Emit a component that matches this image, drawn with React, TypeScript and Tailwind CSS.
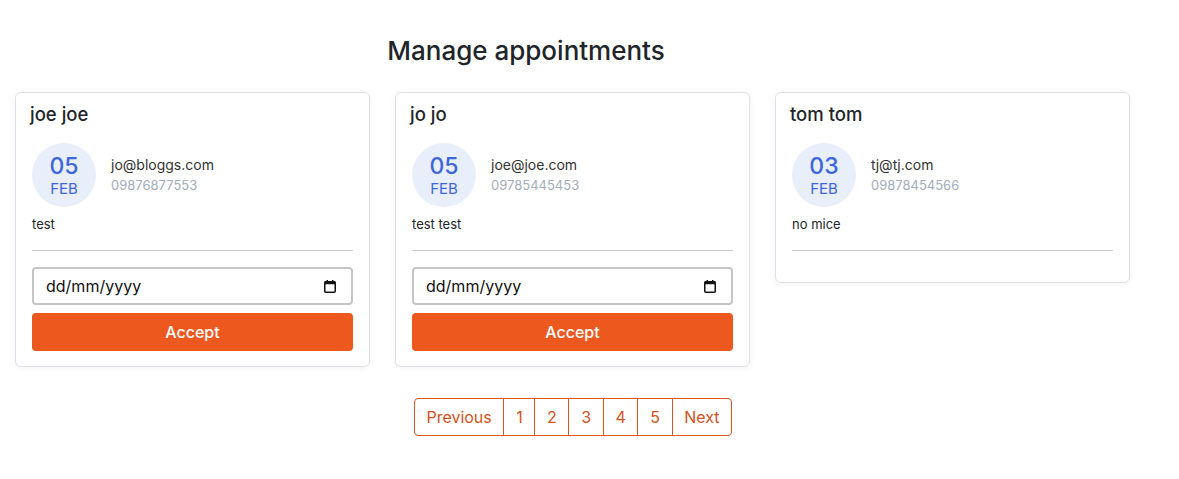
import React from "react";

type Appt = {
  name: string;
  day: string;
  month: string;
  email: string;
  phone: string;
  note: string;
  pending: boolean;
};

const appts: Appt[] = [
  { name: "joe joe", day: "05", month: "FEB", email: "jo@bloggs.com", phone: "09876877553", note: "test", pending: true },
  { name: "jo jo", day: "05", month: "FEB", email: "joe@joe.com", phone: "09785445453", note: "test test", pending: true },
  { name: "tom tom", day: "03", month: "FEB", email: "tj@tj.com", phone: "09878454566", note: "no mice", pending: false },
];

function CalendarIcon() {
  return (
    <svg width="12" height="13" viewBox="0 0 12 13" fill="none">
      <rect x="0.75" y="1.75" width="10.5" height="10.5" rx="1" stroke="#111" strokeWidth="1.5" />
      <rect x="0.75" y="1.75" width="10.5" height="2.5" fill="#111" />
      <rect x="2.5" y="0" width="1.5" height="2" fill="#111" />
      <rect x="8" y="0" width="1.5" height="2" fill="#111" />
    </svg>
  );
}

function Card({ a }: { a: Appt }) {
  return (
    <div className="w-[355px] bg-white border border-[#dee2e6] rounded-[6px] shadow-[0_1px_6px_rgba(0,0,0,0.06)] pt-[8px] px-[16px] pb-[15px] flex flex-col">
      <div className="text-[18.5px] leading-[26px] font-medium text-[#212529] -ml-[2px]">{a.name}</div>
      <div className="flex items-center mt-[16px]">
        <div className="w-[64px] h-[64px] rounded-full bg-[#e9eefb] flex flex-col items-center justify-center text-[#3d66dc]">
          <div className="text-[23px] leading-[27px] font-medium">{a.day}</div>
          <div className="text-[15px] leading-[18px]">{a.month}</div>
        </div>
        <div className="ml-[15px] flex flex-col">
          <div className="text-[14px] leading-[20px] text-[#333]">{a.email}</div>
          <div className="text-[13px] leading-[20px] text-[#a3adbd]">{a.phone}</div>
        </div>
      </div>
      <div className="text-[13px] leading-[20px] text-[#212529] mt-[7px]">{a.note}</div>
      <div className="h-px bg-[#cccccc] mt-[16px]" />
      {a.pending ? (
        <>
          <div className="mt-[16px] h-[38px] border-2 border-[#c5c5c5] rounded-[4px] flex items-center justify-between pl-[12px] pr-[15px]">
            <span className="text-[16px] text-[#111]">dd/mm/yyyy</span>
            <CalendarIcon />
          </div>
          <button className="mt-[8px] h-[38px] bg-[#ed581f] rounded-[4px] text-white text-[16px] font-medium">
            Accept
          </button>
        </>
      ) : (
        <div className="h-[16px]" />
      )}
    </div>
  );
}

export default function App() {
  const pages = ["Previous", "1", "2", "3", "4", "5", "Next"];
  return (
    <div className="w-[1179px] h-[479px] bg-white font-['Inter',sans-serif] text-[#212529]">
      <div className="w-[1052px] text-center pt-[34px]">
        <h2 className="text-[26px] leading-[34px] font-medium">Manage appointments</h2>
      </div>
      <div className="flex items-start gap-[25px] pl-[15px] mt-[24px]">
        {appts.map((a) => (
          <Card key={a.name} a={a} />
        ))}
      </div>
      <div className="w-[1146px] flex justify-center mt-[31px]">
        <div className="flex border border-[#d9541f] rounded-[4px] h-[38px]">
          {pages.map((p, i) => (
            <div
              key={p}
              className={
                "flex items-center px-[11.7px] text-[16px] text-[#d4511b] " +
                (i > 0 ? "border-l border-[#d9541f]" : "")
              }
            >
              {p}
            </div>
          ))}
        </div>
      </div>
    </div>
  );
}
